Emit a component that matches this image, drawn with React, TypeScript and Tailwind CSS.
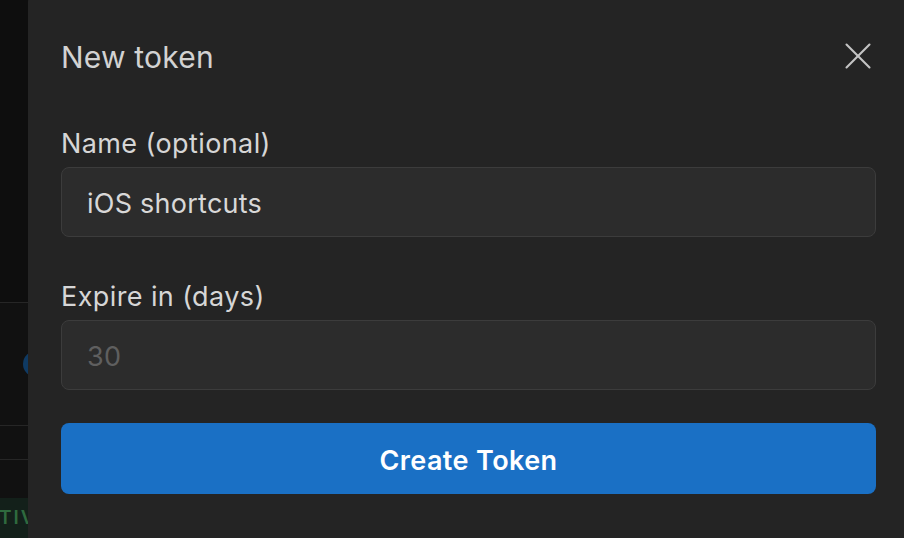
import { X } from 'lucide-react';

function BackdropStrip() {
  return (
    <div className="w-[28px] shrink-0 h-full flex flex-col overflow-hidden bg-[#0e0e0e]">
      <div className="h-[302px] shrink-0 bg-[#0e0e0e]" />
      <div className="h-[123px] shrink-0 border-t border-[#262626] bg-[#111111] flex items-center">
        <div className="ml-[23px] w-[26px] h-[26px] shrink-0 rounded-full bg-[#0f3a63]" />
      </div>
      <div className="h-[34px] shrink-0 border-t border-[#262626] bg-[#111111]" />
      <div className="h-[39px] shrink-0 border-t border-[#262626] bg-[#111111]" />
      <div className="flex-1 bg-[#13201a] flex items-center overflow-hidden">
        <span className="ml-[-1px] text-[19px] font-semibold tracking-[2px] text-[#2f6a3e] whitespace-nowrap">TIVE</span>
      </div>
    </div>
  );
}

function Field({ label, value, placeholder }: { label: string; value?: string; placeholder?: string }) {
  return (
    <div className="flex flex-col">
      <label className="text-[27px] leading-[32px] tracking-[0.4px] text-[#d6d6d6]">{label}</label>
      <div className="mt-[7px] h-[70px] rounded-[8px] border border-[#3c3c3c] bg-[#2c2c2c] flex items-center pl-[25px] pt-[4px]">
        {value ? (
          <span className="text-[27px] tracking-[0.25px] text-[#d8d8d8]">{value}</span>
        ) : (
          <span className="text-[27px] tracking-[0.25px] text-[#5f5f5f]">{placeholder}</span>
        )}
      </div>
    </div>
  );
}

export default function App() {
  return (
    <div
      className="w-[904px] h-[538px] overflow-hidden flex bg-[#0e0e0e]"
      style={{ fontFamily: 'Inter, "Noto Sans", sans-serif' }}
    >
      <BackdropStrip />

      <div className="w-[881px] shrink-0 mt-[-12px] h-[560px] rounded-tl-[14px] bg-[#242424] px-[33px] pt-[51px]">
        <div className="flex items-center justify-between h-[36px]">
          <h2 className="text-[30px] leading-[36px] tracking-[0.2px] text-[#d2d2d2]">New token</h2>
          <X className="w-[46px] h-[46px] mr-[-5px] mt-[-6px] mb-[-4px] shrink-0 text-[#c4c4c4]" strokeWidth={1.1} />
        </div>

        <div className="mt-[53px]">
          <Field label="Name (optional)" value="iOS shortcuts" />
        </div>

        <div className="mt-[44px]">
          <Field label="Expire in (days)" placeholder="30" />
        </div>

        <button className="mt-[33px] w-full h-[71px] rounded-[8px] bg-[#1a70c5] text-white text-[27px] tracking-[0.4px] font-semibold pt-[5px]">
          Create Token
        </button>
      </div>
    </div>
  );
}
